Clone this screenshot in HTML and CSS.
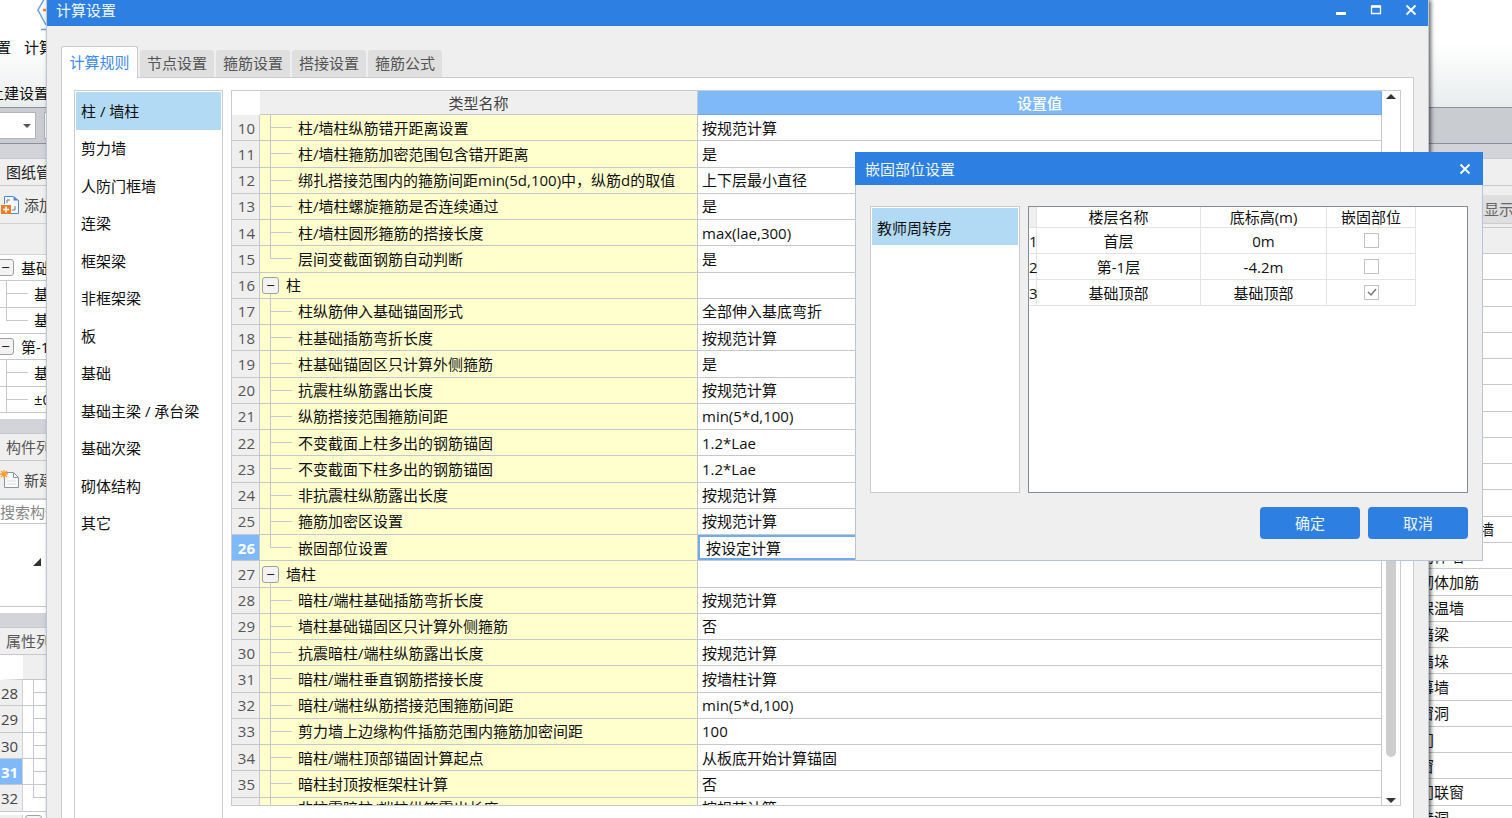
FILE: index.html
```html
<!DOCTYPE html>
<html lang="zh-CN">
<head>
<meta charset="utf-8">
<title>计算设置</title>
<link rel="stylesheet" href="styles.css">
</head>
<body>
<div class="app">
  <header class="ribbon">
    <div class="ribbon-row ribbon-menu"><span>设置</span><span>计算规则</span></div>
    <div class="ribbon-row ribbon-group">土建设置</div>
    <svg class="ribbon-icon" width="24" height="32" viewBox="0 0 24 32" fill="none" stroke="#6a9fe6" stroke-width="1.5"><path d="M10-4 2 10l8 15"/><path d="M5 29.500h19"/><path d="M7 10h12" stroke="#f08030" stroke-width="2.500"/></svg>
  </header>
  <div class="toolstrip"><div class="combo"><i class="caret"></i></div><div class="combo combo-next"></div></div>
  <div class="gap gap-top"></div>
  <main class="workspace">
    <section class="left">
      <h2 class="panel-title dark">图纸管理</h2>
      <div class="panel-tools">
        <svg width="20" height="20" viewBox="0 0 20 20" fill="none"><path d="M4.500 9V1.500h9l5 4v13H11" fill="#f5f9ff" stroke="#4a8ad4"/><path d="M13.500 1.500v4h5z" fill="#4a8ad4"/><path d="M7 8V5h3M15 11v4h-3" stroke="#777"/><path d="M1 10h10v9H1z" fill="#f07d26"/><path d="M6 11.500v6M3 14.500h6" stroke="#fff" stroke-width="1.600"/></svg>
        <span>添加</span>
      </div>
      <div class="list-head"></div>
      <ul class="tree">
        <li class="root"><button class="toggle" aria-label="折叠">−</button>基础层</li>
        <li class="leaf">基础</li>
        <li class="leaf last">基础</li>
        <li class="root"><button class="toggle" aria-label="折叠">−</button>第-1层</li>
        <li class="leaf">基础</li>
        <li class="leaf">±0</li>
      </ul>
      <div class="spacer"></div>
      <div class="gap"></div>
      <h2 class="panel-title">构件列表</h2>
      <div class="panel-tools">
        <svg width="20" height="20" viewBox="0 0 20 20" fill="none"><path d="M4.500 2.500h9l5 5v10h-14z" fill="#fafafa" stroke="#8a979f"/><path d="M13.500 2.500v5h5" stroke="#8a979f"/><path d="M7 11h9M7 14h9" stroke="#ddd"/><path d="M4 0v8M0 4h8M1 1l6 6M7 1 1 7" stroke="#f7a030" stroke-width="1.300"/></svg>
        <span>新建</span>
      </div>
      <input class="search" type="text" placeholder="搜索构件..." aria-label="搜索构件">
      <div class="parts"><svg width="8" height="8" viewBox="0 0 8 8"><path d="M8 0v8H0z" fill="#333"/></svg></div>
      <div class="spacer"></div>
      <div class="gap"></div>
      <h2 class="panel-title">属性列表</h2>
      <div class="prop-head"></div>
      <ol class="props">
        <li><b>28</b></li><li><b>29</b></li><li><b>30</b></li><li class="on"><b>31</b></li><li class="end"><b>32</b></li><li class="more"><b></b><button class="toggle" aria-label="折叠">−</button></li>
      </ol>
    </section>
    <section class="right">
      <div class="panel-title"></div>
      <div class="right-tools"><button class="show">设置显示</button></div>
      <div class="right-head"></div>
      <ul class="types">
        <li></li><li></li><li></li><li></li><li></li><li></li><li></li><li></li><li></li><li></li>
        <li>人防门框墙</li><li>砌体墙</li><li>砌体加筋</li><li>保温墙</li><li>暗梁</li><li>墙垛</li><li>幕墙</li><li>窗洞</li><li>门</li><li>窗</li><li>门联窗</li><li>墙洞</li>
      </ul>
    </section>
  </main>
</div>

<section class="window settings" role="dialog" aria-label="计算设置">
  <header class="titlebar">
    <h1>计算设置</h1>
    <button aria-label="最小化"><svg width="12" height="12" viewBox="0 0 12 12"><path d="M1 9.500h10" stroke="#fff" stroke-width="3"/></svg></button>
    <button aria-label="最大化"><svg width="12" height="12" viewBox="0 0 12 12"><path d="M1.500 2.500h9v7h-9z" fill="none" stroke="#fff" stroke-width="1.300"/><path d="M1 2.500h10" stroke="#fff" stroke-width="2.500"/></svg></button>
    <button aria-label="关闭"><svg width="12" height="12" viewBox="0 0 12 12"><path d="m1.500 1.500 9 9m0-9-9 9" stroke="#fff" stroke-width="1.800"/></svg></button>
  </header>
  <nav class="tabs" role="tablist">
    <button role="tab" class="active">计算规则</button><button role="tab">节点设置</button><button role="tab">箍筋设置</button><button role="tab">搭接设置</button><button role="tab">箍筋公式</button>
  </nav>
  <div class="pane">
    <ul class="categories">
      <li class="selected">柱 / 墙柱</li><li>剪力墙</li><li>人防门框墙</li><li>连梁</li><li>框架梁</li><li>非框架梁</li><li>板</li><li>基础</li><li>基础主梁 / 承台梁</li><li>基础次梁</li><li>砌体结构</li><li>其它</li>
    </ul>
    <div class="content">
      <div class="sheet">
        <div class="sheet-view">
        <table class="rules">
          <colgroup><col class="c-num"><col class="c-name"><col></colgroup>
          <thead><tr><td class="corner"></td><th>类型名称</th><th class="current">设置值</th></tr></thead>
          <tbody>
            <tr><th>10</th><td class="leaf">柱/墙柱纵筋错开距离设置</td><td>按规范计算</td></tr>
            <tr><th>11</th><td class="leaf">柱/墙柱箍筋加密范围包含错开距离</td><td>是</td></tr>
            <tr><th>12</th><td class="leaf">绑扎搭接范围内的箍筋间距min(5d,100)中，纵筋d的取值</td><td>上下层最小直径</td></tr>
            <tr><th>13</th><td class="leaf">柱/墙柱螺旋箍筋是否连续通过</td><td>是</td></tr>
            <tr><th>14</th><td class="leaf">柱/墙柱圆形箍筋的搭接长度</td><td>max(lae,300)</td></tr>
            <tr><th>15</th><td class="leaf last">层间变截面钢筋自动判断</td><td>是</td></tr>
            <tr><th>16</th><td class="root"><button class="toggle" aria-label="折叠">−</button>柱</td><td></td></tr>
            <tr><th>17</th><td class="leaf">柱纵筋伸入基础锚固形式</td><td>全部伸入基底弯折</td></tr>
            <tr><th>18</th><td class="leaf">柱基础插筋弯折长度</td><td>按规范计算</td></tr>
            <tr><th>19</th><td class="leaf">柱基础锚固区只计算外侧箍筋</td><td>是</td></tr>
            <tr><th>20</th><td class="leaf">抗震柱纵筋露出长度</td><td>按规范计算</td></tr>
            <tr><th>21</th><td class="leaf">纵筋搭接范围箍筋间距</td><td>min(5*d,100)</td></tr>
            <tr><th>22</th><td class="leaf">不变截面上柱多出的钢筋锚固</td><td>1.2*Lae</td></tr>
            <tr><th>23</th><td class="leaf">不变截面下柱多出的钢筋锚固</td><td>1.2*Lae</td></tr>
            <tr><th>24</th><td class="leaf">非抗震柱纵筋露出长度</td><td>按规范计算</td></tr>
            <tr><th>25</th><td class="leaf">箍筋加密区设置</td><td>按规范计算</td></tr>
            <tr class="editing"><th>26</th><td class="leaf last">嵌固部位设置</td><td><input type="text" value="按设定计算" aria-label="嵌固部位设置"></td></tr>
            <tr><th>27</th><td class="root"><button class="toggle" aria-label="折叠">−</button>墙柱</td><td></td></tr>
            <tr><th>28</th><td class="leaf">暗柱/端柱基础插筋弯折长度</td><td>按规范计算</td></tr>
            <tr><th>29</th><td class="leaf">墙柱基础锚固区只计算外侧箍筋</td><td>否</td></tr>
            <tr><th>30</th><td class="leaf">抗震暗柱/端柱纵筋露出长度</td><td>按规范计算</td></tr>
            <tr><th>31</th><td class="leaf">暗柱/端柱垂直钢筋搭接长度</td><td>按墙柱计算</td></tr>
            <tr><th>32</th><td class="leaf">暗柱/端柱纵筋搭接范围箍筋间距</td><td>min(5*d,100)</td></tr>
            <tr><th>33</th><td class="leaf">剪力墙上边缘构件插筋范围内箍筋加密间距</td><td>100</td></tr>
            <tr><th>34</th><td class="leaf">暗柱/端柱顶部锚固计算起点</td><td>从板底开始计算锚固</td></tr>
            <tr><th>35</th><td class="leaf">暗柱封顶按框架柱计算</td><td>否</td></tr>
            <tr class="cut"><th></th><td class="leaf">非抗震暗柱/端柱纵筋露出长度</td><td>按规范计算</td></tr>
          </tbody>
        </table>
        </div>
        <div class="scrollbar"><i class="up"></i><div class="track"><div class="thumb"></div></div><i class="down"></i></div>
      </div>
      <p class="hint">提示信息：请设置</p>
    </div>
  </div>
</section>

<section class="window fixing" role="dialog" aria-label="嵌固部位设置">
  <header class="titlebar">
    <h1>嵌固部位设置</h1>
    <button aria-label="关闭"><svg width="12" height="12" viewBox="0 0 12 12"><path d="m1.500 1.500 9 9m0-9-9 9" stroke="#fff" stroke-width="1.800"/></svg></button>
  </header>
  <div class="fixing-body">
    <ul class="buildings"><li class="selected">教师周转房</li></ul>
    <div class="floors-box">
      <table class="floors">
        <colgroup><col class="f-num"><col class="f-name"><col class="f-height"><col class="f-check"></colgroup>
        <thead><tr><td class="corner"></td><th>楼层名称</th><th>底标高(m)</th><th>嵌固部位</th></tr></thead>
        <tbody>
          <tr><th>1</th><td>首层</td><td>0m</td><td><input type="checkbox" aria-label="首层"></td></tr>
          <tr><th>2</th><td>第-1层</td><td>-4.2m</td><td><input type="checkbox" aria-label="第-1层"></td></tr>
          <tr><th>3</th><td>基础顶部</td><td>基础顶部</td><td><input type="checkbox" checked aria-label="基础顶部"></td></tr>
        </tbody>
      </table>
    </div>
  </div>
  <footer class="actions"><button>确定</button><button>取消</button></footer>
</section>
</body>
</html>
```
FILE: styles.css
```css
* { box-sizing: border-box; }
body, h1, h2, p, ul, ol { margin: 0; padding: 0; }
ul, ol { list-style: none; }
body {
  position: relative;
  height: 100vh;
  overflow: hidden;
  font: 15px/20px "Open Sans", "Noto Sans CJK SC", sans-serif;
  color: #111;
  background: #fff;
}
button, input { font: inherit; color: inherit; margin: 0; }
button { border: 0; padding: 0; background: none; }
h1, h2, th { font-size: 15px; font-weight: 400; }
table { border-collapse: separate; border-spacing: 0; table-layout: fixed; }

/* main application behind the dialogs */
.app { display: flex; flex-direction: column; height: 100%; overflow: hidden; }
.ribbon {
  position: relative;
  flex: none;
  height: 107px;
  padding-top: 37px;
  background: linear-gradient(#fff 40%, #e9edee);
}
.ribbon-row { height: 20px; white-space: nowrap; }
.ribbon-menu { display: flex; gap: 13px; margin-left: -19px; }
.ribbon-group { margin: 26px 0 0 -11px; }
.ribbon-icon { position: absolute; left: 36px; top: 0; }
.toolstrip {
  flex: none;
  display: flex;
  gap: 8px;
  height: 37px;
  padding: 4px 0;
  border: solid #8b9096;
  border-width: 1px 0;
  background: #c9ccd1;
}
.combo {
  display: flex;
  justify-content: flex-end;
  align-items: center;
  width: 36px;
  padding-right: 4px;
  border: 1px solid #b2b5b8;
  border-left: 0;
  background: #fff;
}
.combo-next { border-left: 1px solid #b2b5b8; }
.caret { border: 4px solid transparent; border-top-color: #555; border-bottom: 0; }
.gap { flex: none; height: 15px; background: #d3d4da; border-bottom: 1px solid #c5c8ce; }
.workspace { flex: 1; display: flex; justify-content: space-between; }
.left { width: 240px; }
.right { width: 120px; }
.panel-title {
  height: 27px;
  padding: 3px 6px;
  border-bottom: 1px solid #c5c8cd;
  background: #efefef;
  color: #555;
}
.panel-title.dark { color: #222; }
.panel-tools {
  display: flex;
  align-items: center;
  gap: 4px;
  height: 38px;
  border-bottom: 1px solid #d0d3d6;
  background: #efefef;
  color: #444;
}
.list-head { height: 31px; background: #efefef; border-bottom: 1px solid #d0d3d6; }
.tree, .props { display: grid; grid-auto-rows: 1fr; height: 158px; }
.tree li { display: flex; align-items: center; border-bottom: 1px solid #c5c8cd; }
.tree .root { gap: 7px; }
.tree .root .toggle { margin-left: -3px; }
.tree .leaf {
  padding-left: 34px;
  background:
    linear-gradient(#c5c8cd, #c5c8cd) 6px 0 / 1px 100% no-repeat,
    linear-gradient(#c5c8cd, #c5c8cd) 6px 50% / 22px 1px no-repeat;
}
.tree .leaf.last { background-size: 1px 50%, 22px 1px; }
.toggle {
  flex: none;
  width: 17px;
  height: 17px;
  border: 1px solid #a0a0a0;
  border-radius: 3px;
  background: #f3f3f3;
  font-size: 15px;
  line-height: 13px;
  text-align: center;
  color: #222;
}
.spacer { height: 6px; background: #fff; }
.search {
  display: block;
  width: 100%;
  height: 25px;
  padding: 0;
  border: 1px solid #c5c8cd;
  border-left: 0;
  background: #fff;
}
.search::placeholder { color: #888; opacity: 1; }
.parts { height: 83px; padding: 34px 0 0 33px; border-bottom: 1px solid #c5c8cd; }
.parts svg { display: block; }
.prop-head { height: 25px; border-left: 23px solid #fff; border-bottom: 1px solid #c5c8cd; background: #efefef; }
.props li {
  display: flex;
  border-bottom: 1px solid #c5c8cd;
  background:
    linear-gradient(#c5c8cd, #c5c8cd) 33px 0 / 1px 100% no-repeat,
    linear-gradient(#c5c8cd, #c5c8cd) 33px 50% / 60px 1px no-repeat;
}
.props .end { background-size: 1px 50%, 60px 1px; }
.props .more { background: #fff; gap: 2px; padding-top: 3px; }
.props b {
  width: 23px;
  padding: 3px 0 0 1px;
  border-right: 1px solid #d0d3d6;
  background: #efefef;
  font-weight: 400;
  color: #444;
}
.props .on b { background: #80b9f9; color: #fff; font-weight: 700; }
.right-tools { height: 42px; padding-top: 9px; background: #efefef; border-bottom: 1px solid #c5c8cd; }
.show {
  width: 100%;
  height: 29px;
  padding-left: 62px;
  border-bottom: 1px solid #ccc;
  background: #dfdfdf;
  color: #666;
  text-align: left;
  white-space: nowrap;
}
.right-head { height: 26px; background: #efefef; border-bottom: 1px solid #c5c8cd; }
.types { display: grid; grid-auto-rows: 1fr; height: 578px; background: #fff; }
.types li { display: flex; align-items: center; padding-left: 27px; border-bottom: 1px solid #c5c8cd; }

/* dialog windows */
.window { position: absolute; display: flex; flex-direction: column; background: #efefef; }
.titlebar { flex: none; display: flex; align-items: center; background: #2d80e1; color: #eef5fd; }
.titlebar h1 { flex: 1; }
.titlebar svg { display: block; }
.settings {
  left: 46px;
  right: 83px;
  top: 0;
  bottom: 0;
  border: solid #bfc6d3;
  border-width: 0 1px;
  box-shadow: 2px 0 4px rgba(0, 0, 0, .6);
  overflow: hidden;
}
.settings .titlebar { height: 26px; margin: 0 -1px; padding: 0 12px 6px 10px; gap: 23px; }
.tabs { flex: none; display: flex; align-items: flex-end; gap: 2px; height: 51px; padding-left: 14px; }
.tabs button { width: 74px; height: 27px; padding-bottom: 2px; border-radius: 3px 3px 0 0; background: #dfdfdf; color: #555; }
.tabs .active {
  position: relative;
  width: 77px;
  height: 32px;
  margin-bottom: -1px;
  border: 1px solid #c8cbd0;
  border-bottom: 0;
  background: #fff;
  color: #3d8af0;
}
.pane {
  flex: 1;
  min-height: 0;
  display: flex;
  gap: 8px;
  margin: 0 14px;
  padding: 12px 12px 0;
  border: solid #c8cbd0;
  border-width: 1px 1px 0;
  background: #fff;
}
.categories {
  flex: none;
  display: grid;
  grid-template-rows: repeat(12, minmax(0, 1fr));
  width: 149px;
  padding: 1px 1px 276px;
  border: 1px solid #c8cbd0;
  border-bottom: 0;
}
.categories li, .buildings li { display: flex; align-items: center; padding-left: 5px; white-space: nowrap; }
.selected { background: #b2daf5; }
.content { flex: 1; min-width: 0; display: flex; flex-direction: column; }
.sheet { flex: 1; min-height: 0; display: flex; border: 1px solid #c8cbd0; }
.sheet-view { flex: 1; overflow: hidden; }
.hint { flex: none; height: 12px; padding: 9px 4px 0; color: #999; overflow: hidden; }
.rules { width: 100%; height: 733px; }
.c-num { width: 28px; }
.c-name { width: 438px; }
.rules td, .rules th { padding: 0; border: solid #c5c8cd; border-width: 0 1px 1px 0; white-space: nowrap; }
.rules thead th { height: 24px; background: #efefef; color: #444; }
.rules thead .corner { height: 24px; border: 0; background: #fff; }
.rules thead .current { background: #80b9f9; border-color: #6eabef; color: #fff; font-weight: 500; }
.rules tbody th { padding-right: 4px; background: #efefef; color: #555; text-align: right; }
.rules tbody td { padding-left: 4px; background: #fff; }
.rules tbody .leaf {
  padding-left: 38px;
  background:
    linear-gradient(#c5c8cd, #c5c8cd) 10px 0 / 1px 100% no-repeat,
    linear-gradient(#c5c8cd, #c5c8cd) 10px 50% / 22px 1px no-repeat,
    #ffffcd;
}
.rules tbody .leaf.last { background-size: 1px 50%, 22px 1px, auto; }
.rules tbody .root {
  padding-left: 2px;
  background: linear-gradient(#c5c8cd, #c5c8cd) 10px 100% / 1px 30% no-repeat, #ffffcd;
}
.rules .toggle { margin-right: 7px; }
.rules .cut td { vertical-align: top; }
.rules .editing th { background: #80b9f9; color: #fff; font-weight: 700; }
.rules .editing td:last-child { box-shadow: inset 0 0 0 2px #6eabef; }
.rules input { display: block; width: 96%; height: 20px; margin-left: 4px; padding: 0; border: 0; background: none; outline: 0; }
.scrollbar { flex: none; display: flex; flex-direction: column; align-items: center; width: 18px; padding: 3px 0 2px; }
.up, .down { border: 5px solid transparent; }
.up { border-top: 0; border-bottom-color: #333; }
.down { border-bottom: 0; border-top-color: #333; }
.track { flex: 1; display: flex; flex-direction: column; justify-content: flex-end; padding-bottom: 41px; }
.thumb { width: 10px; height: 64%; border-radius: 5px; background: #cdcdcd; }

.fixing {
  left: 855px;
  right: 29px;
  top: 152px;
  border: 1px solid #b9c4d6;
  border-top: 0;
}
.fixing .titlebar { height: 33px; margin: 0 -1px; padding: 0 12px 0 10px; }
.fixing-body { display: flex; gap: 8px; height: 308px; padding: 21px 14px 0; }
.buildings { width: 150px; padding: 1px; border: 1px solid #c8cbd0; background: #fff; }
.buildings li { height: 37px; padding: 2px 5px 0; }
.floors-box { flex: 1; border: 1px solid #858c94; background: #fff; }
.floors { width: 387px; }
.f-num { width: 8px; }
.f-name { width: 164px; }
.f-height { width: 126px; }
.f-check { width: 89px; }
.floors th, .floors td { height: 26px; padding: 0; border: solid #e3e3e3; border-width: 0 1px 1px 0; text-align: center; white-space: nowrap; }
.floors thead th, .floors thead td { height: 21px; }
.floors .corner { background: #efefef; }
.floors input {
  display: block;
  appearance: none;
  width: 15px;
  height: 15px;
  margin: 0 auto;
  border: 1px solid #c3c3c3;
  background: #fff;
}
.floors input:checked {
  background: #fff url("data:image/svg+xml,%3Csvg xmlns='http://www.w3.org/2000/svg' viewBox='0 0 13 13'%3E%3Cpath d='M3 6l3 3 5-6' fill='none' stroke='%23777' stroke-width='1.5'/%3E%3C/svg%3E");
}
.actions { display: flex; justify-content: flex-end; gap: 8px; padding: 14px 14px 21px; }
.actions button { width: 100px; height: 32px; border-radius: 4px; background: #2d80e1; color: #eef5fd; }
```
